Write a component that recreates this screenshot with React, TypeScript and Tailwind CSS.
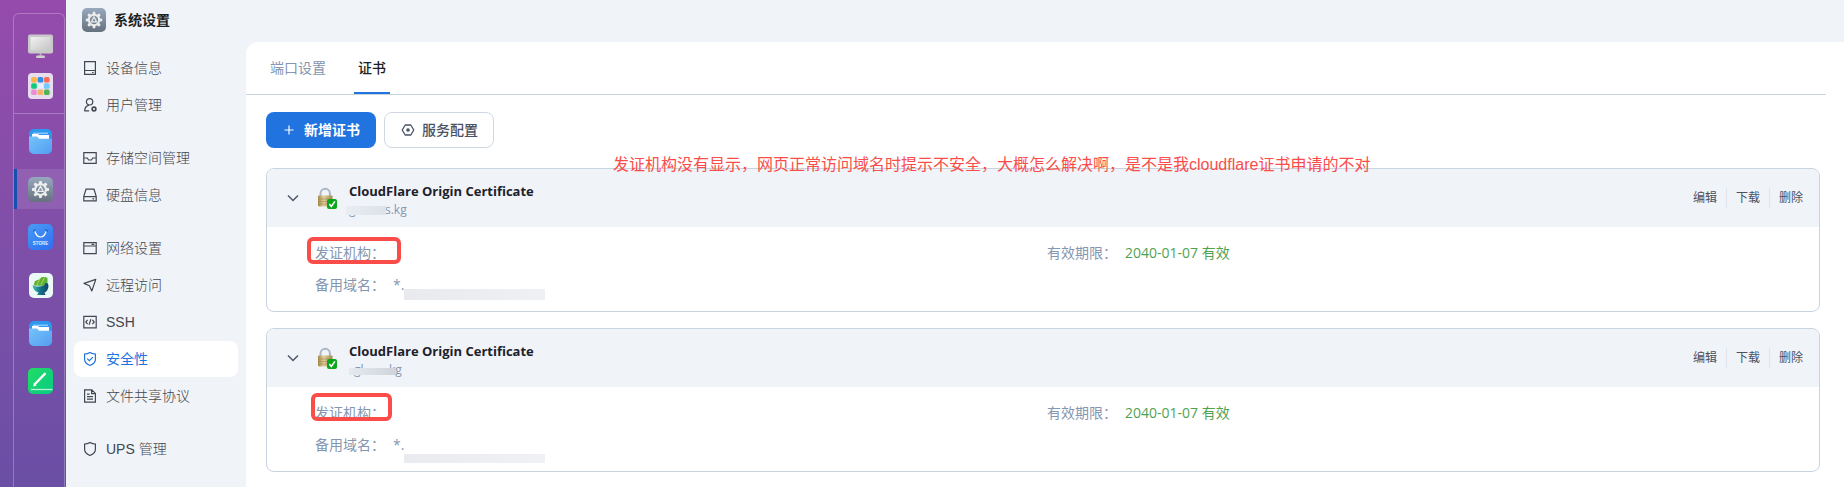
import type { ReactNode } from "react";

type NavItem = {
  label: string;
  icon: ReactNode;
  active?: boolean;
};

type Certificate = {
  id: string;
  name: string;
  domain: ReactNode;
  altDomain: ReactNode;
  expires: string;
  mark: string;
};

function LineIcon({ children }: { children: ReactNode }) {
  return (
    <svg
      viewBox="0 0 16 16"
      className="w-4 h-4 shrink-0"
      fill="none"
      stroke="currentColor"
      strokeWidth="1.2"
    >
      {children}
    </svg>
  );
}

const navGroups: NavItem[][] = [
  [
    {
      label: "设备信息",
      icon: (
        <LineIcon>
          <path d="M2.6 1.6h10.8v12.8H2.6zM2.6 10.5h10.8M10 12.5h1.6" />
        </LineIcon>
      ),
    },
    {
      label: "用户管理",
      icon: (
        <LineIcon>
          <circle cx="7.6" cy="4.8" r="3.2" />
          <path d="M2.6 14.2c0-3 1.6-5.2 4.4-6M2.6 13.8h4.6" />
          <circle cx="12" cy="12" r="1.9" strokeWidth="1.6" />
        </LineIcon>
      ),
    },
  ],
  [
    {
      label: "存储空间管理",
      icon: (
        <LineIcon>
          <path d="M1.8 2.6h12.4v10.8H1.8zM1.8 8h3.4l1.4 2h2.8l1.4-2h3.4" />
        </LineIcon>
      ),
    },
    {
      label: "硬盘信息",
      icon: (
        <LineIcon>
          <path d="M4 2.2h8l2.2 7.2v4.4H1.8V9.4zM1.8 9.6h12.4M10.4 11.8h1.8" />
        </LineIcon>
      ),
    },
  ],
  [
    {
      label: "网络设置",
      icon: (
        <LineIcon>
          <path d="M1.8 2.6h12.4v11H1.8zM1.8 6h12.4M9.6 4.3h2.6" />
        </LineIcon>
      ),
    },
    {
      label: "远程访问",
      icon: (
        <LineIcon>
          <path d="M13.8 2.4 9.8 14 7.4 8.8 2 6.4z" strokeLinejoin="round" />
        </LineIcon>
      ),
    },
    {
      label: "SSH",
      icon: (
        <LineIcon>
          <path d="M1.8 2.4h12.4v11.4H1.8zM5.6 5.8 3.8 8l1.8 2.2M10.4 5.8 12.2 8l-1.8 2.2M8.9 5.2l-1.8 5.6" />
        </LineIcon>
      ),
    },
    {
      label: "安全性",
      active: true,
      icon: (
        <LineIcon>
          <path d="M8 1.5c1.8 1.1 3.5 1.5 5.4 1.5v5.4c0 2.6-2 4.6-5.4 6.1-3.4-1.5-5.4-3.5-5.4-6.1V3C4.5 3 6.2 2.6 8 1.5z" />
          <path d="m5.2 7.6 2.1 2.1 3.6-3.6" />
        </LineIcon>
      ),
    },
    {
      label: "文件共享协议",
      icon: (
        <LineIcon>
          <path d="M2.6 1.8h7.2l3.6 3.6v8.8H2.6zM9.6 1.8v3.8h3.8M5 6.2h2.6M5 8.6h6M5 11.2h6" />
        </LineIcon>
      ),
    },
  ],
  [
    {
      label: "UPS 管理",
      icon: (
        <LineIcon>
          <path d="M8 1.5c1.8 1.1 3.5 1.5 5.4 1.5v5.4c0 2.6-2 4.6-5.4 6.1-3.4-1.5-5.4-3.5-5.4-6.1V3C4.5 3 6.2 2.6 8 1.5z" />
        </LineIcon>
      ),
    },
  ],
];

function GearAppIcon({ id, className }: { id: string; className: string }) {
  return (
    <svg viewBox="0 0 24 24" className={className}>
      <defs>
        <linearGradient id={id} x1="0" y1="0" x2="0" y2="1">
          <stop offset="0" stopColor="#98a9bd" />
          <stop offset="1" stopColor="#66717e" />
        </linearGradient>
      </defs>
      <rect width="24" height="24" rx="5" fill={`url(#${id})`} />
      <circle cx="12" cy="12" r="5.2" fill="none" stroke="#eee" strokeWidth="2" />
      {[0, 45, 90, 135, 180, 225, 270, 315].map((deg) => (
        <path
          key={deg}
          d="M10.4 6.4 10.8 3.8h2.4l.4 2.6z"
          fill="#eee"
          transform={`rotate(${deg} 12 12)`}
        />
      ))}
      <path d="m12 9 2.6 4.8H9.4z" fill="none" stroke="#eee" strokeWidth="1.2" />
    </svg>
  );
}

function FolderIcon({ id }: { id: string }) {
  return (
    <svg viewBox="0 0 25 25" className="w-[25px] h-[25px]">
      <defs>
        <linearGradient id={id} x1="0" y1="0" x2="1" y2="1">
          <stop offset="0" stopColor="#74c3fc" />
          <stop offset="1" stopColor="#559df0" />
        </linearGradient>
      </defs>
      <rect x="1" width="23" height="25" rx="5" fill="#2e97f0" />
      <path d="M4 5h6l1.500 1H21v6H4z" fill="#fff" />
      <path d="M5 4.200h15" stroke="#b8defc" />
      <path
        d="M1 7.500h8l2 2.300h13V20a5 5 0 0 1-5 5H6a5 5 0 0 1-5-5z"
        fill={`url(#${id})`}
      />
    </svg>
  );
}

function MonitorIcon() {
  return (
    <svg viewBox="0 0 25 25" className="w-[25px] h-[25px]">
      <defs>
        <linearGradient id="screen" x1="0" y1="0" x2="1" y2="1">
          <stop offset="0" stopColor="#f1f1f1" />
          <stop offset="1" stopColor="#c4c4c4" />
        </linearGradient>
      </defs>
      <path d="M11.5 19h2v4h-2z" fill="#aaa" />
      <rect x="8" y="21.5" width="9" height="2.5" rx="1.2" fill="#cfcfcf" />
      <rect y="0.5" width="25" height="19" rx="2" fill="#c9c9c9" />
      <rect x="2.5" y="3" width="20" height="13.5" rx="1" fill="url(#screen)" />
    </svg>
  );
}

function AppGridIcon() {
  const dots = [
    "#fdb544", "#2e8ee8", "#fb6c58",
    "#10cb79", "#e9effc", "#76cbfc",
    "#ea90cd", "#f2b46d", "#50b356",
  ];
  return (
    <svg viewBox="0 0 25 26" className="w-[25px] h-[26px]">
      <rect width="25" height="26" rx="4" fill="#e8dcef" />
      {dots.map((color, i) => (
        <rect
          key={color}
          x={3.2 + (i % 3) * 6.4}
          y={4 + Math.floor(i / 3) * 6.2}
          width="5.6"
          height="5.6"
          rx="1.6"
          fill={color}
        />
      ))}
    </svg>
  );
}

function StoreIcon() {
  return (
    <svg viewBox="0 0 25 26" className="w-[25px] h-[26px]">
      <defs>
        <linearGradient id="store" x1="0" y1="0" x2="0.6" y2="1">
          <stop offset="0" stopColor="#4c9af3" />
          <stop offset="1" stopColor="#2f75f3" />
        </linearGradient>
      </defs>
      <rect width="25" height="26" rx="5" fill="url(#store)" />
      <path
        d="M5.500 7.500a1.500 1.500 0 0 1 2-1.500M17.500 6a1.500 1.500 0 0 1 2 1.500"
        stroke="#1c4fa8"
        fill="none"
      />
      <path
        d="M7 7.500c1 3.600 3 5.500 5.500 5.500S17 11.100 18 7.500"
        stroke="#fff"
        strokeWidth="1.2"
        fill="none"
      />
      <text
        x="12.5"
        y="21"
        fontSize="4.5"
        fontWeight="700"
        textAnchor="middle"
        fill="#e3eeff"
        fontFamily="Liberation Sans, sans-serif"
      >
        STORE
      </text>
    </svg>
  );
}

function BowlIcon() {
  return (
    <svg viewBox="0 0 25 25" className="w-[25px] h-[25px]">
      <defs>
        <linearGradient id="bowl" x1="0" y1="0" x2="1" y2="0">
          <stop offset="0" stopColor="#43c0b3" />
          <stop offset="0.5" stopColor="#137086" />
          <stop offset="1" stopColor="#12436b" />
        </linearGradient>
      </defs>
      <rect x="1" width="24" height="25" rx="5" fill="#eaf8f6" />
      <path d="M5.5 12.5 7 8l4-1.500 3-2.500h3.500l2 1v8z" fill="#5db03a" />
      <path d="m12 5.500-3 6.500M16.500 4.500l-3.500 7" stroke="#b0d94c" />
      <path
        d="M4.500 12c3 2 8 2 11.500.5L17.500 10l2.500.5.500 3c-.5 3.500-2 4.800-4 6.200l1 2.300H9l1.500-2.500C7 18.500 5 16 4.500 12z"
        fill="url(#bowl)"
      />
    </svg>
  );
}

function NoteIcon() {
  return (
    <svg viewBox="0 0 25 26" className="w-[25px] h-[26px]">
      <defs>
        <linearGradient id="note" x1="0" y1="0" x2="1" y2="1">
          <stop offset="0" stopColor="#23dc64" />
          <stop offset="1" stopColor="#06cb85" />
        </linearGradient>
      </defs>
      <rect width="25" height="26" rx="5" fill="url(#note)" />
      <path
        d="m7 16 9.800-10.200"
        stroke="#fff"
        strokeWidth="2.4"
        strokeLinecap="round"
      />
      <path d="m5.200 18.400.6-3.400 2.800 2.500z" fill="#fff" />
      <path d="M3 21.500h21.500" stroke="#b5f2d3" strokeWidth="1.3" />
    </svg>
  );
}

function DockItem({
  label,
  active,
  children,
}: {
  label: string;
  active?: boolean;
  children: ReactNode;
}) {
  return (
    <button
      aria-label={label}
      className={`flex w-full h-10 items-center justify-center border-l-[3px] cursor-pointer ${
        active ? "border-[#1450b0] bg-white/10" : "border-transparent"
      }`}
    >
      {children}
    </button>
  );
}

function Dock() {
  return (
    <aside className="w-[66px] shrink-0 flex flex-col pl-[13px] pr-px pt-[13px] bg-linear-to-b from-[#954bac] via-[#7f4fa8] via-50% to-[#6a4fa5]">
      <div className="flex-1 rounded-t-md border border-b-0 border-white/25">
        <div className="pt-3 pb-[7px] border-b border-white/25">
          <DockItem label="桌面">
            <MonitorIcon />
          </DockItem>
          <DockItem label="应用">
            <AppGridIcon />
          </DockItem>
        </div>
        <div className="flex flex-col gap-2 pt-[7px]">
          <DockItem label="文件">
            <FolderIcon id="folder-a" />
          </DockItem>
          <DockItem label="系统设置" active>
            <GearAppIcon id="gear-dock" className="w-[25px] h-[25px]" />
          </DockItem>
          <DockItem label="应用商店">
            <StoreIcon />
          </DockItem>
          <DockItem label="工具">
            <BowlIcon />
          </DockItem>
          <DockItem label="文件夹">
            <FolderIcon id="folder-b" />
          </DockItem>
          <DockItem label="笔记">
            <NoteIcon />
          </DockItem>
        </div>
      </div>
    </aside>
  );
}

function Sidebar() {
  return (
    <div className="w-[180px] shrink-0 px-2 pt-2 font-['Liberation_Sans','Noto_Sans_CJK_SC',sans-serif]">
      <h1 className="flex h-6 items-center gap-2 px-2 text-sm font-bold text-[#1c1f24]">
        <GearAppIcon id="gear-title" className="w-6 h-6" />
        系统设置
      </h1>
      <nav className="flex flex-col gap-[17px] pt-[18px]">
        {navGroups.map((group, i) => (
          <ul key={i} className="flex flex-col gap-px">
            {group.map((item) => (
              <li key={item.label}>
                <a
                  href="#"
                  className={`flex h-9 items-center gap-2 rounded-lg px-2 text-sm ${
                    item.active
                      ? "bg-white text-[#2173df]"
                      : "font-light text-[#43474f]"
                  }`}
                >
                  {item.icon}
                  {item.label}
                </a>
              </li>
            ))}
          </ul>
        ))}
      </nav>
    </div>
  );
}

function LockIcon() {
  return (
    <svg viewBox="0 0 20 22" className="w-5 h-[22px] shrink-0">
      <defs>
        <linearGradient id="brass" x1="0" y1="0" x2="1" y2="0">
          <stop offset="0" stopColor="#a58c4c" />
          <stop offset="0.4" stopColor="#e0d09a" />
          <stop offset="1" stopColor="#a38a4d" />
        </linearGradient>
      </defs>
      <path
        d="M3.500 10V6.500a4.700 4.700 0 0 1 9.400 0V10"
        fill="none"
        stroke="#a9b8c4"
        strokeWidth="2"
      />
      <rect x="1" y="8.5" width="14.5" height="11" rx="1" fill="url(#brass)" />
      <path
        d="M1 12h14.500M1 14.500h14.500M1 17h14.500"
        stroke="#8f7a41"
        strokeWidth="0.5"
      />
      <rect x="10" y="12" width="10" height="10" rx="2" fill="#0ba51c" />
      <path d="m12.300 17 2 2.400 3.600-5" fill="none" stroke="#fff" strokeWidth="1.6" />
    </svg>
  );
}

const certificates: Certificate[] = [
  {
    id: "cert-1",
    name: "CloudFlare Origin Certificate",
    domain: (
      <>
        <span className="w-9">g</span>
        <span>s.kg</span>
        <span className="absolute -left-[3px] top-[5px] h-[9px] w-10 bg-linear-to-r from-[#e9edf2] to-[#dde2e8]" />
      </>
    ),
    altDomain: (
      <>
        *.
        <span className="absolute left-[11px] top-[15px] h-[11px] w-[141px] bg-linear-to-r from-[#e8eaee] to-[#eff0f3]" />
      </>
    ),
    expires: "2040-01-07 有效",
    mark: "-left-2 -top-[5px] w-[94px] h-[27px]",
  },
  {
    id: "cert-2",
    name: "CloudFlare Origin Certificate",
    domain: (
      <>
        <span className="w-10 pl-[5px]">gl</span>
        <span>kg</span>
        <span className="absolute left-0 top-[7px] h-[7px] w-[47px] bg-linear-to-r from-[#e6eaef] to-[#cfd4da]" />
      </>
    ),
    altDomain: (
      <>
        *.
        <span className="absolute left-[11px] top-5 h-[9px] w-[141px] bg-linear-to-r from-[#e9ebee] to-[#f0f1f4]" />
      </>
    ),
    expires: "2040-01-07 有效",
    mark: "-left-1 -top-[9px] w-[81px] h-[28px]",
  },
];

function CertificateCard({ cert }: { cert: Certificate }) {
  return (
    <section className="overflow-hidden rounded-lg border border-[#c8d3e0]">
      <header className="flex h-[58px] items-center bg-[#f0f3f8] pl-[18px] pr-4">
        <button aria-label="收起" className="mr-3 cursor-pointer">
          <svg
            viewBox="0 0 16 16"
            className="w-4 h-4"
            fill="none"
            stroke="#4f5768"
            strokeWidth="1.5"
          >
            <path d="m3 5.500 5 5 5-5" />
          </svg>
        </button>
        <span className="mx-1">
          <LockIcon />
        </span>
        <div className="ml-2 pt-1">
          <h2 className="text-[13px] leading-5 font-bold text-[#1d2129]">
            {cert.name}
          </h2>
          <p className="relative flex text-xs leading-[18px] text-[#8496b0]">
            {cert.domain}
          </p>
        </div>
        <div className="ml-auto flex items-center text-xs text-[#4a5261]">
          <button className="cursor-pointer pr-[9px]">编辑</button>
          <button className="h-5 cursor-pointer border-l border-[#dfe4ec] px-[9px]">
            下载
          </button>
          <button className="h-5 cursor-pointer border-l border-[#dfe4ec] pl-[9px]">
            删除
          </button>
        </div>
      </header>
      <dl className="grid grid-cols-2 gap-y-[10px] pl-12 pr-10 pt-[15px] pb-[15px] text-sm leading-[22px] text-[#8496b0]">
        <div className="relative flex">
          <dt className="w-[78px]">发证机构：</dt>
          <dd />
          <span
            className={`absolute rounded-md border-4 border-[#fa4d4a] ${cert.mark}`}
          />
        </div>
        <div className="flex">
          <dt className="w-[78px]">有效期限：</dt>
          <dd className="text-[#4fa353]">{cert.expires}</dd>
        </div>
        <div className="flex">
          <dt className="w-[78px]">备用域名：</dt>
          <dd className="relative">{cert.altDomain}</dd>
        </div>
      </dl>
    </section>
  );
}

function App() {
  return (
    <div
      lang="zh-CN"
      className="flex min-h-screen bg-[#f0f3f8] font-['Open_Sans','Noto_Sans_CJK_SC',sans-serif]"
    >
      <Dock />
      <Sidebar />
      <main className="relative mt-[42px] flex-1 min-w-0 rounded-tl-xl bg-white">
        <div className="mr-[18px] flex h-[53px] gap-5 border-b border-[#c8d3e0] pl-4 text-sm">
          <button className="cursor-pointer px-2 text-[#8496b0]">
            端口设置
          </button>
          <button className="cursor-pointer border-b-2 border-[#2173df] px-1 pt-[2px] font-medium text-[#1c1f24]">
            证书
          </button>
        </div>

        <div className="pl-5 pr-6 pt-[17px] pb-3">
          <div className="flex gap-2 text-sm">
            <button className="flex h-9 cursor-pointer items-center gap-2 rounded-lg bg-[#2173df] px-4 font-bold text-white">
              <svg
                viewBox="0 0 14 14"
                className="w-[14px] h-[14px]"
                fill="none"
                stroke="currentColor"
                strokeWidth="1.2"
              >
                <path d="M7 2.500v9M2.500 7h9" />
              </svg>
              新增证书
            </button>
            <button className="flex h-9 cursor-pointer items-center gap-[6px] rounded-lg border border-[#d0d8e4] px-[15px] font-medium text-[#485264]">
              <svg
                viewBox="0 0 16 16"
                className="w-4 h-4"
                fill="none"
                stroke="currentColor"
                strokeWidth="1.3"
              >
                <path d="M5.200 3h5.600l3 5-3 5H5.200l-3-5z" strokeLinejoin="round" />
                <circle cx="8" cy="8" r="1.8" fill="currentColor" stroke="none" />
              </svg>
              服务配置
            </button>
          </div>

          <div className="flex flex-col gap-4 pt-5">
            {certificates.map((cert) => (
              <CertificateCard key={cert.id} cert={cert} />
            ))}
          </div>
        </div>

        {/* note pinned over the list */}
        <p className="absolute left-[367px] top-[111px] whitespace-nowrap text-base leading-6 text-[#fa4d4a] font-['Liberation_Sans','Noto_Sans_CJK_SC',sans-serif]">
          发证机构没有显示，网页正常访问域名时提示不安全，大概怎么解决啊，是不是我cloudflare证书申请的不对
        </p>
      </main>
    </div>
  );
}

export default App;
